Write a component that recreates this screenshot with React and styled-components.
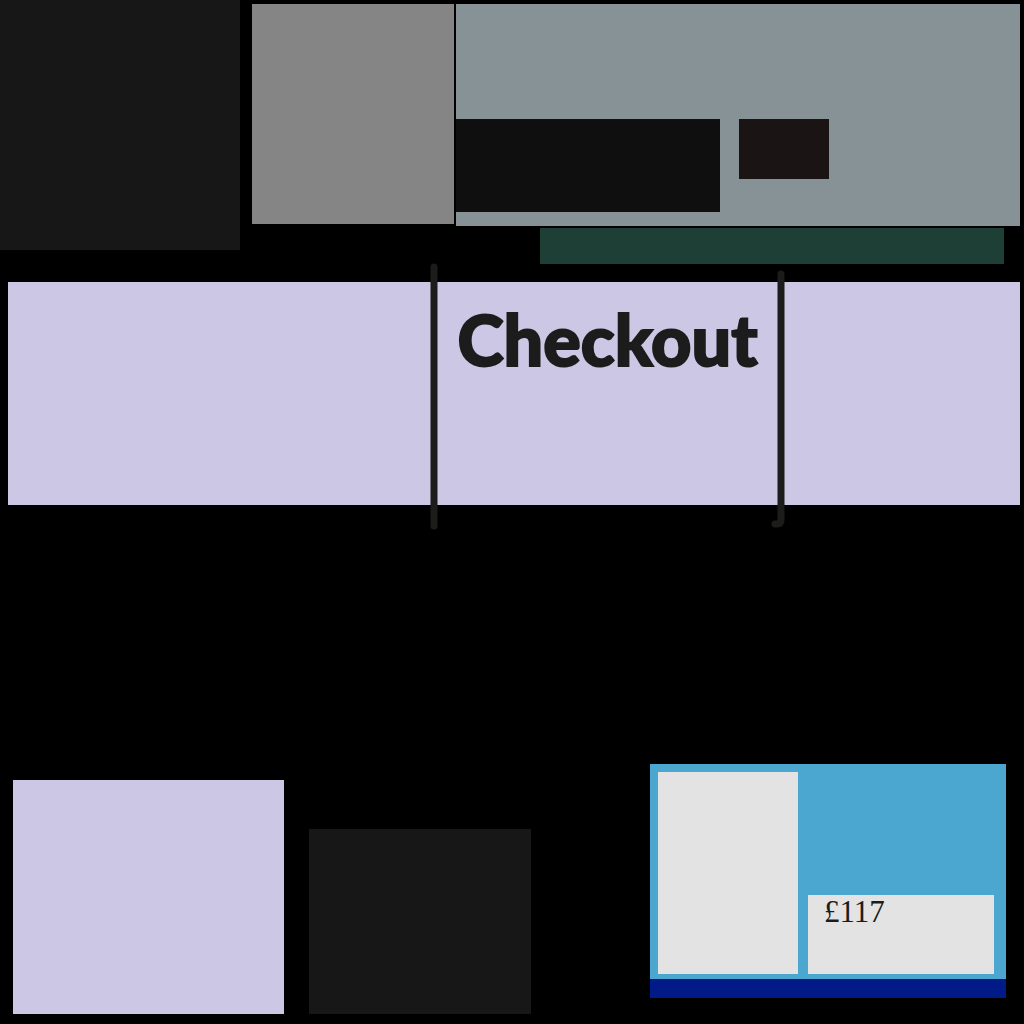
import React from "react";
import styled, { createGlobalStyle } from "styled-components";

const GlobalStyle = createGlobalStyle`
  *, *::before, *::after { box-sizing: border-box; }
  body { margin: 0; background: #000; color: #1c1c1c; }
`;

const Page = styled.div`
  display: flex;
  flex-direction: column;
  min-height: 100vh;
`;

const Header = styled.header`
  display: grid;
  grid-template-columns: 240fr 216fr 564fr;
  align-items: start;
  padding-right: 4px;
`;

const Block = styled.div`
  background: ${(p) => p.$color};
  height: ${(p) => p.$height}px;
`;

const Thumb = styled(Block)`
  margin: 4px 2px 0 12px;
`;

const HeroColumn = styled.div`
  display: flex;
  flex-direction: column;
  gap: 2px;
  padding-top: 4px;
`;

const Hero = styled.div`
  display: flex;
  align-items: flex-start;
  gap: 19px;
  padding: 115px 0 14px;
  background: #879297;
`;

const Tile = styled(Block)`
  width: ${(p) => p.$width}px;
`;

const Strip = styled(Block)`
  margin: 0 16px 0 84px;
`;

const Band = styled.main`
  display: grid;
  grid-template-columns: 426fr 347fr 239fr;
  min-height: 223px;
  margin: 18px 4px 0 8px;
  background: #ccc7e4;
`;

const Middle = styled.section`
  position: relative;
  grid-column: 2;
  display: flex;
  justify-content: center;
  padding-top: 22px;
`;

const Title = styled.h1`
  margin: 0;
  font: 900 70px/70px Lato, "Liberation Sans", sans-serif;
  -webkit-text-stroke: 2px #1c1c1c;
`;

const Divider = styled.svg`
  position: absolute;
  top: -20px;
  ${(p) => p.$side}: -12px;
  fill: none;
  stroke: #1c1c1a;
  stroke-width: 7;
  stroke-linecap: round;
  stroke-linejoin: round;
`;

const Footer = styled.footer`
  display: flex;
  align-items: flex-end;
  justify-content: space-between;
  margin-top: auto;
  padding: 0 18px 10px 13px;
`;

const Tiles = styled.div`
  display: flex;
  align-items: flex-end;
  gap: 25px;
`;

const Card = styled.article`
  width: 356px;
  margin-bottom: 16px;
  border-bottom: 19px solid #001a88;
  background: #4ba7cf;
  display: flex;
  align-items: flex-end;
  gap: 10px;
  padding: 8px 12px 5px 8px;
`;

const CardImage = styled(Block)`
  flex: 0 0 140px;
`;

const PriceBox = styled.div`
  flex: 1;
  min-height: 79px;
  padding: 0 16px;
  background: #e3e3e3;
`;

const Price = styled.p`
  margin: 0;
  font: 400 31px/34px "Liberation Serif", serif;
`;

export default function App() {
  return (
    <Page>
      <GlobalStyle />
      <Header>
        <Block $color="#171717" $height={250} />
        <Thumb $color="#858585" $height={220} />
        <HeroColumn>
          <Hero>
            <Tile $color="#0f0f0f" $width={264} $height={93} />
            <Tile $color="#1b1414" $width={90} $height={60} />
          </Hero>
          <Strip $color="#1e3f35" $height={36} />
        </HeroColumn>
      </Header>
      <Band>
        <Middle>
          <Divider $side="left" width="24" height="270" aria-hidden="true">
            <path d="M12 5V264" />
          </Divider>
          <Title>Checkout</Title>
          <Divider $side="right" width="24" height="270" aria-hidden="true">
            <path d="M12 12V258Q12 262 8 262H6" />
          </Divider>
        </Middle>
      </Band>
      <Footer>
        <Tiles>
          <Tile $color="#ccc7e4" $width={271} $height={234} />
          <Tile $color="#171717" $width={222} $height={185} />
        </Tiles>
        <Card>
          <CardImage $color="#e3e3e3" $height={202} />
          <PriceBox>
            <Price>£117</Price>
          </PriceBox>
        </Card>
      </Footer>
    </Page>
  );
}
